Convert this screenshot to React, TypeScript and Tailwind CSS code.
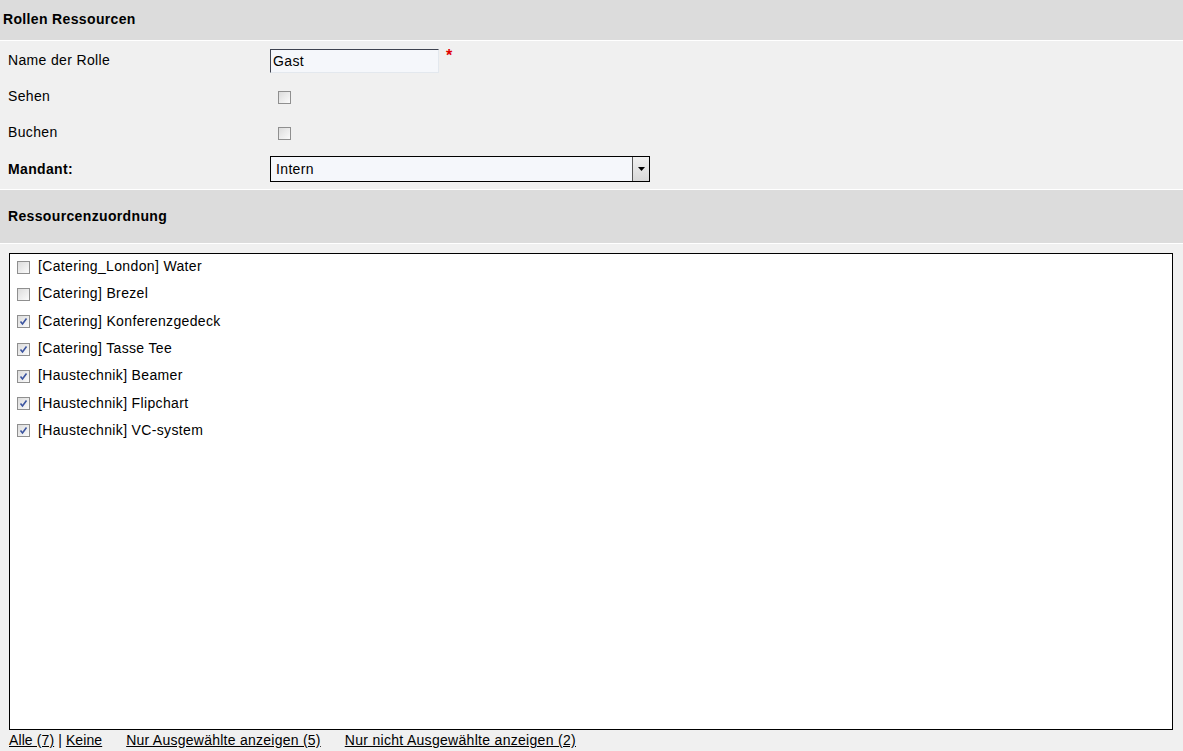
import React from "react";

function Box({ checked }: { checked?: boolean }) {
  return (
    <span className="relative inline-block w-[13px] h-[13px] shrink-0 border border-[#8f8f8f] bg-gradient-to-br from-[#dcdcdc] to-[#fbfbfb]">
      {checked && (
        <svg viewBox="0 0 11 11" className="absolute left-0 top-0 w-[11px] h-[11px]">
          <path d="M2.5 5.5 L4.5 8 L8.5 2.5" fill="none" stroke="#3c55a0" strokeWidth="1.6" />
        </svg>
      )}
    </span>
  );
}

const items: [string, boolean][] = [
  ["[Catering_London] Water", false],
  ["[Catering] Brezel", false],
  ["[Catering] Konferenzgedeck", true],
  ["[Catering] Tasse Tee", true],
  ["[Haustechnik] Beamer", true],
  ["[Haustechnik] Flipchart", true],
  ["[Haustechnik] VC-system", true],
];

export default function App() {
  return (
    <div
      className="w-[1183px] h-[751px] overflow-hidden bg-[#f0f0f0] text-black text-[14px] tracking-[0.35px] flex flex-col"
      style={{ fontFamily: '"Liberation Sans", Arial, sans-serif' }}
    >
      <div className="h-[41px] shrink-0 bg-[#dcdcdc] border-b border-white flex items-center pl-[3px] font-bold pb-[1px]">
        Rollen Ressourcen
      </div>
      <div className="h-[149px] shrink-0 pt-[1px] pl-[8px] border-b border-white">
        <div className="h-[36px] flex items-center">
          <div className="w-[262px]">Name der Rolle</div>
          <div className="w-[169px] h-[24px] mt-[2px] border border-t-[#3f4350] border-l-[#3f4350] border-r-[#e3e8ee] border-b-[#e3e8ee] bg-[#f5f7fb] flex items-center pl-[2px] pt-[1px]">
            Gast
          </div>
          <span className="text-[#e00000] font-bold text-[16px] ml-[7px] self-start mt-[6px] leading-none">*</span>
        </div>
        <div className="h-[36px] flex items-center">
          <div className="w-[262px]">Sehen</div>
          <span className="ml-[8px] mt-[2px] flex"><Box /></span>
        </div>
        <div className="h-[36px] flex items-center">
          <div className="w-[262px]">Buchen</div>
          <span className="ml-[8px] mt-[2px] flex"><Box /></span>
        </div>
        <div className="h-[36px] flex items-center">
          <div className="w-[262px] font-bold pt-[2px]">Mandant:</div>
          <div className="w-[380px] h-[26px] mt-[2px] border border-black bg-[#f5f7fb] flex items-center">
            <div className="flex-1 pl-[5px]">Intern</div>
            <div className="w-[17px] h-[24px] border-l border-[#555] bg-gradient-to-b from-[#f0f0f0] to-[#d8d8d8] flex items-center justify-center">
              <svg width="7" height="4" viewBox="0 0 7 4"><path d="M0 0 H7 L3.5 4 Z" fill="#000" /></svg>
            </div>
          </div>
        </div>
      </div>
      <div className="h-[54px] shrink-0 bg-[#dcdcdc] border-b border-white flex items-center pl-[8px] font-bold">
        Ressourcenzuordnung
      </div>
      <div className="flex-1 flex flex-col pl-[9px] pr-[10px] pt-[9px]">
        <div className="h-[477px] shrink-0 border border-black bg-white pl-[7px] overflow-hidden">
          <div className="-mt-[1px]">
            {items.map(([label, c]) => (
              <div key={label} className="h-[27.3px] flex items-center">
                <span className="mt-[1px] flex"><Box checked={c} /></span>
                <span className="ml-[8px]">{label}</span>
              </div>
            ))}
          </div>
        </div>
        <div className="h-[21px] flex items-center whitespace-pre tracking-[0.1px]">
          <a className="underline">Alle (7)</a>
          <span> | </span>
          <a className="underline">Keine</a>
          <a className="underline ml-[24px] tracking-[0.25px]">Nur Ausgewählte anzeigen (5)</a>
          <a className="underline ml-[24px] tracking-[0.3px]">Nur nicht Ausgewählte anzeigen (2)</a>
        </div>
      </div>
    </div>
  );
}
